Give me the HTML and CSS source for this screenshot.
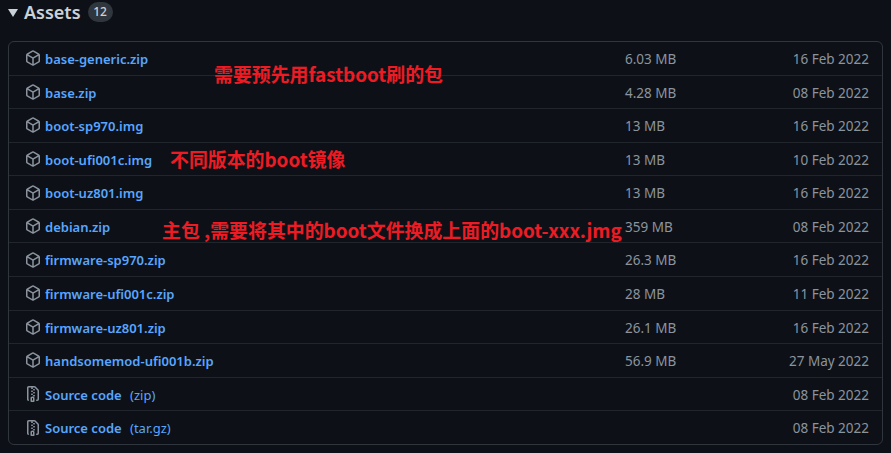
FILE: index.html
```html
<!DOCTYPE html>
<html lang="zh">
<head>
    <meta charset="UTF-8">
    <title>Assets</title>
    <link rel="stylesheet" href="styles.css">
</head>
<body>
    <svg class="sprite" width="0" height="0">
        <symbol id="package" viewBox="0 0 16 16"><path d="m8.878.392 5.25 3.045c.54.314.872.89.872 1.514v6.098a1.75 1.75 0 0 1-.872 1.514l-5.25 3.045a1.75 1.75 0 0 1-1.756 0l-5.25-3.045A1.75 1.75 0 0 1 1 11.049V4.951c0-.624.332-1.201.872-1.514L7.122.392a1.75 1.75 0 0 1 1.756 0ZM7.875 1.69l-4.63 2.685L8 7.133l4.755-2.758-4.63-2.685a.248.248 0 0 0-.25 0ZM2.5 5.677v5.372c0 .09.047.171.125.216l4.625 2.683V8.432Zm6.25 8.271 4.625-2.683a.25.25 0 0 0 .125-.216V5.677L8.75 8.432Z"/></symbol>
        <symbol id="file-zip" viewBox="0 0 16 16"><path d="M3.5 1.75v11.5c0 .09.048.173.126.217a.75.75 0 0 1-.752 1.298A1.748 1.748 0 0 1 2 13.25V1.75C2 .784 2.784 0 3.75 0h5.586c.464 0 .909.185 1.237.513l2.914 2.914c.329.328.513.773.513 1.237v8.586A1.75 1.75 0 0 1 12.25 15h-.5a.75.75 0 0 1 0-1.5h.5a.25.25 0 0 0 .25-.25V4.664a.25.25 0 0 0-.073-.177L9.513 1.573a.25.25 0 0 0-.177-.073H7.25a.75.75 0 0 1 0 1.5h-.5a.75.75 0 0 1 0-1.5h-3a.25.25 0 0 0-.25.25Zm3.75 8.75h.5c.966 0 1.75.784 1.75 1.75v3a.75.75 0 0 1-.75.75h-2.5a.75.75 0 0 1-.75-.75v-3c0-.966.784-1.75 1.75-1.75ZM6 5.25a.75.75 0 0 1 .75-.75h.5a.75.75 0 0 1 0 1.5h-.5A.75.75 0 0 1 6 5.25Zm.75 2.25h.5a.75.75 0 0 1 0 1.5h-.5a.75.75 0 0 1 0-1.5ZM8 6.75A.75.75 0 0 1 8.75 6h.5a.75.75 0 0 1 0 1.5h-.5A.75.75 0 0 1 8 6.75ZM8.75 3h.5a.75.75 0 0 1 0 1.5h-.5a.75.75 0 0 1 0-1.5ZM8 9.75A.75.75 0 0 1 8.75 9h.5a.75.75 0 0 1 0 1.5h-.5A.75.75 0 0 1 8 9.75Zm-1 2.5v2.25h1v-2.25a.25.25 0 0 0-.25-.25h-.5a.25.25 0 0 0-.25.25Z"/></symbol>
    </svg>

    <!-- Titre -->
    <div class="assets-head">
        <span class="caret"></span>
        <h2>Assets</h2>
        <span class="counter">12</span>
    </div>

    <!-- Liste des fichiers -->
    <ul class="assets">
        <li class="row"><svg class="icon"><use href="#package"/></svg><a class="name">base-generic.zip</a><span class="size">6.03 MB</span><span class="date">16 Feb 2022</span></li>
        <li class="row"><svg class="icon"><use href="#package"/></svg><a class="name">base.zip</a><span class="size">4.28 MB</span><span class="date">08 Feb 2022</span></li>
        <li class="row"><svg class="icon"><use href="#package"/></svg><a class="name">boot-sp970.img</a><span class="size">13 MB</span><span class="date">16 Feb 2022</span></li>
        <li class="row"><svg class="icon"><use href="#package"/></svg><a class="name">boot-ufi001c.img</a><span class="size">13 MB</span><span class="date">10 Feb 2022</span></li>
        <li class="row"><svg class="icon"><use href="#package"/></svg><a class="name">boot-uz801.img</a><span class="size">13 MB</span><span class="date">16 Feb 2022</span></li>
        <li class="row"><svg class="icon"><use href="#package"/></svg><a class="name">debian.zip</a><span class="size">359 MB</span><span class="date">08 Feb 2022</span></li>
        <li class="row"><svg class="icon"><use href="#package"/></svg><a class="name">firmware-sp970.zip</a><span class="size">26.3 MB</span><span class="date">16 Feb 2022</span></li>
        <li class="row"><svg class="icon"><use href="#package"/></svg><a class="name">firmware-ufi001c.zip</a><span class="size">28 MB</span><span class="date">11 Feb 2022</span></li>
        <li class="row"><svg class="icon"><use href="#package"/></svg><a class="name">firmware-uz801.zip</a><span class="size">26.1 MB</span><span class="date">16 Feb 2022</span></li>
        <li class="row"><svg class="icon"><use href="#package"/></svg><a class="name">handsomemod-ufi001b.zip</a><span class="size">56.9 MB</span><span class="date">27 May 2022</span></li>
        <li class="row"><svg class="icon"><use href="#file-zip"/></svg><a class="name">Source code <span class="kind">(zip)</span></a><span class="date">08 Feb 2022</span></li>
        <li class="row"><svg class="icon"><use href="#file-zip"/></svg><a class="name">Source code <span class="kind">(tar.gz)</span></a><span class="date">08 Feb 2022</span></li>
    </ul>

    <!-- Annotations rouges -->
    <p class="note note-base">需要预先用fastboot刷的包</p>
    <p class="note note-boot">不同版本的boot镜像</p>
    <p class="note note-main">主包 ,需要将其中的boot文件换成上面的boot-xxx.jmg</p>
</body>
</html>
```

FILE: styles.css
```css
/* Styles globaux */
body {
    margin: 0;
    height: 453px;
    overflow: hidden;
    background: #0d1117;
    color: #8b949e;
    font-family: 'Noto Sans', 'Liberation Sans', sans-serif;
    font-size: 13.5px;
}

.sprite {
    position: absolute;
}

/* Titre */
.assets-head {
    display: flex;
    align-items: center;
    height: 24px;
    padding-left: 8px;
    margin-bottom: 17px;
}

.caret {
    width: 0;
    height: 0;
    border-left: 5px solid transparent;
    border-right: 5px solid transparent;
    border-top: 8px solid #c9d1d9;
    margin-top: 2px;
    margin-right: 6px;
}

.assets-head h2 {
    margin: 0;
    font-size: 18px;
    font-weight: 600;
    line-height: 24px;
    color: #c9d1d9;
}

.counter {
    margin-left: 7px;
    width: 25px;
    height: 20px;
    border-radius: 10px;
    background: #30363d;
    color: #c9d1d9;
    font-size: 12px;
    font-weight: 500;
    line-height: 20px;
    text-align: center;
}

/* Liste des fichiers */
.assets {
    list-style: none;
    margin: 0 8px;
    padding: 0;
    height: 402px;
    display: flex;
    flex-direction: column;
    border: 1px solid #30363d;
    border-radius: 6px;
}

.row {
    flex: 1;
    display: flex;
    align-items: center;
    padding-left: 16px;
    border-top: 1px solid #21262d;
}

.row:first-child {
    border-top: none;
}

.icon {
    width: 16px;
    height: 16px;
    fill: #8b949e;
    margin-right: 4px;
    flex: none;
}

.name,
.size,
.date {
    padding-top: 1.4px;
}

.name {
    width: 580px;
    color: #58a6ff;
    font-size: 13px;
    font-weight: 600;
    white-space: pre;
}

.kind {
    font-weight: 400;
    margin-left: 5px;
}

.size {
    width: 120px;
}

.date {
    margin-left: auto;
    margin-right: 13px;
}

/* Annotations rouges */
.note {
    position: absolute;
    margin: 0;
    color: #ed1c24;
    font-family: 'Noto Sans CJK SC', sans-serif;
    font-size: 18.9px;
    font-weight: 700;
    line-height: 24px;
    white-space: nowrap;
}

.note-base {
    left: 214px;
    top: 62px;
}

.note-boot {
    left: 170px;
    top: 147px;
}

.note-main {
    left: 162px;
    top: 218px;
}
```
